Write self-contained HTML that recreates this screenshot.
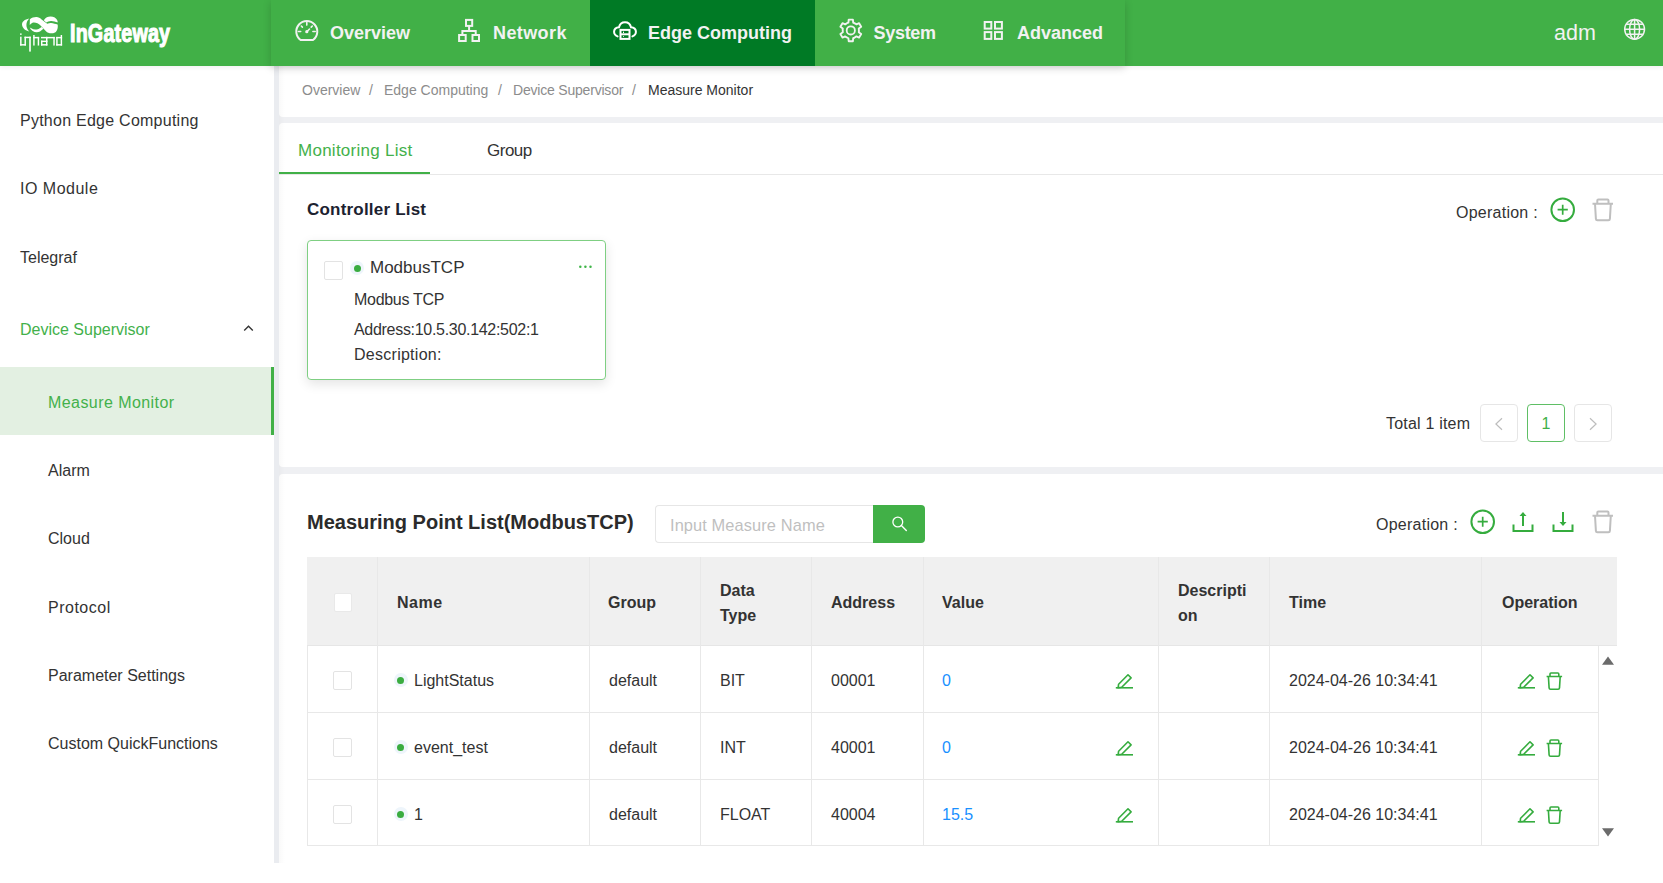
<!DOCTYPE html>
<html><head><meta charset="utf-8">
<style>
*{box-sizing:border-box;margin:0;padding:0}
html,body{width:1663px;height:883px;overflow:hidden;background:#fff;font-family:"Liberation Sans",sans-serif;color:#333}
.a{position:absolute}
.t{position:absolute;white-space:nowrap;line-height:1}
#hdr{left:0;top:0;width:1663px;height:66px;background:#41b047;box-shadow:0 1px 5px rgba(0,0,0,.07);z-index:5}
.nav{color:#f2f2f2;font-size:18px;font-weight:bold}
.side{font-size:16px;color:#333}
.gstrip{background:#eceef2}
svg{position:absolute;overflow:visible}
.th{font-size:16px;font-weight:bold;color:#333}
.td{font-size:16px;color:#333}
</style></head><body>

<!-- HEADER -->
<div id="hdr" class="a">
  <!-- logo -->
  <svg style="left:0;top:0" width="70" height="66" viewBox="0 0 70 66">
    <g fill="#fff">
      <path d="M29.3 18.6C24.6 19.4 21.6 22 22.1 25.2C22.6 28.2 25.4 30.6 29.3 31.4C27.3 29.4 26.4 27.3 26.4 25C26.4 22.6 27.3 20.4 29.3 18.6Z"/>
      <rect x="20.1" y="33.4" width="1.5" height="1.5"/>
      <rect x="20.1" y="36.7" width="1.45" height="8.85"/>
      <rect x="20.1" y="44.1" width="5.85" height="1.45"/>
      <rect x="24.5" y="36.7" width="1.45" height="8.85"/>
      <rect x="24.5" y="36.7" width="6.3" height="1.45"/>
      <rect x="29.2" y="36.7" width="1.6" height="14.9"/>
      <rect x="33.2" y="35.0" width="1.45" height="10.55"/>
      <rect x="33.2" y="36.9" width="5.95" height="1.45"/>
      <rect x="37.7" y="36.9" width="1.45" height="8.65"/>
      <rect x="41" y="36.9" width="6.45" height="1.45"/>
      <rect x="41" y="40.6" width="1.45" height="4.95"/>
      <rect x="41" y="40.6" width="6.45" height="1.45"/>
      <rect x="41" y="44.1" width="6.45" height="1.45"/>
      <rect x="46" y="36.9" width="1.45" height="8.65"/>
      <rect x="46" y="36.9" width="8.75" height="1.45"/>
      <rect x="53.3" y="36.9" width="1.45" height="8.65"/>
      <rect x="56.2" y="36.9" width="1.45" height="8.65"/>
      <rect x="56.2" y="36.9" width="5.9" height="1.45"/>
      <rect x="56.2" y="44.1" width="5.9" height="1.45"/>
      <rect x="60.65" y="35.0" width="1.45" height="10.55"/>
    </g>
    <g fill="#fff">
      <path d="M29.9 19.3C31.5 17.5 34.5 16.8 36.5 16.9C38.5 17 40 17.8 41.3 19.2L47.2 23.8C48.5 23.3 50 22.8 51 22.9C53.5 23 55.5 24 57.6 24.4C58.2 27 57.5 31 55 32.5C52 34 48 33.5 46 31.3L40.5 25.5C38.5 23.5 35 22 32.5 22.8C31.5 23.2 30.5 24 29.7 25Z"/>
      <path d="M29.7 27.5C31.5 31.5 36 33.5 40 31.6L43.4 28.8L41.6 26.9C38.5 29.6 34.5 30.5 31.3 28.3Z"/>
      <path d="M43.8 20.2C45.5 17.5 48 16.6 50.5 16.6C53.5 16.6 56.5 18 57.6 21L57.6 22.6C55.5 21.6 53 20.8 51 20.9C49 21 47.5 21.8 46.2 22.6Z"/>
    </g>
  </svg>
  <div class="t" style="left:70px;top:21px;font-size:25px;font-weight:bold;color:#fff;transform:scaleX(.79);transform-origin:0 0;-webkit-text-stroke:1.1px #fff;letter-spacing:.2px">InGateway</div>

  <div class="a" style="left:271px;top:0;width:854px;height:66px;box-shadow:0 2px 8px rgba(0,0,0,.17)"></div>
  <div class="a" style="left:590px;top:0;width:225px;height:66px;background:#007a25"></div>

  <div class="t nav" style="left:330px;top:24px">Overview</div>
  <div class="t nav" style="left:493px;top:24px;letter-spacing:.4px">Network</div>
  <div class="t nav" style="left:648px;top:24px">Edge Computing</div>
  <div class="t nav" style="left:873.5px;top:24px;letter-spacing:-.3px">System</div>
  <div class="t nav" style="left:1017px;top:24px">Advanced</div>
  <div class="t" style="left:1554px;top:23px;font-size:21.5px;color:#f2f2f2">adm</div>
  <svg style="left:294px;top:18px" width="26" height="26" viewBox="0 0 26 26">
    <path d="M6.6 22A10.5 10.5 0 1 1 19 22Z" fill="none" stroke="#f2f2f2" stroke-width="2" stroke-linejoin="round"/>
    <path d="M12.8 4.6v2.5M4.4 13.5h2.3M18.9 13.5h2.3M7.3 8l1.1 1.1M18.3 8l-1.1 1.1M12.8 13.7l2.7-2.7" stroke="#f2f2f2" stroke-width="1.6" stroke-linecap="round"/>
    <circle cx="12.8" cy="13.7" r="1.6" fill="#f2f2f2"/>
  </svg>
  <svg style="left:456px;top:17px" width="26" height="26" viewBox="0 0 26 26">
    <g fill="none" stroke="#f2f2f2" stroke-width="2">
      <rect x="10" y="2.9" width="6.2" height="6"/>
      <rect x="3.1" y="18" width="6.6" height="6"/>
      <rect x="16.5" y="18" width="6.5" height="6"/>
      <path d="M13.1 8.9V14M6.4 18V14H19.7V18"/>
    </g>
  </svg>
  <svg style="left:611px;top:18px" width="28" height="26" viewBox="0 0 28 26">
    <g fill="none" stroke="#fff" stroke-width="2">
      <path d="M6.6 18.4C1.8 16.5 1.6 10 8 9.3C9.5 2.6 18.5 2.6 20 9.3C26.4 10 26.2 16.5 21.4 18.4" stroke-linecap="round"/>
      <rect x="9.5" y="11.9" width="9" height="9"/>
      <path d="M9.5 16.3h9"/>
    </g>
    <path d="M12.5 13.6v1.4M12.5 18v.8" stroke="#fff" stroke-width="1"/>
  </svg>
  <svg style="left:837px;top:17px" width="28" height="28" viewBox="0 0 28 28">
    <path d="M10.66 5.82 L11.40 5.56 L11.70 2.60 L15.90 2.60 L16.20 5.56 L18.79 6.89 L19.39 7.40 L22.10 6.18 L24.20 9.82 L21.79 11.56 L21.93 14.47 L21.79 15.24 L24.20 16.98 L22.10 20.62 L19.39 19.40 L16.94 20.98 L16.20 21.24 L15.90 24.20 L11.70 24.20 L11.40 21.24 L8.81 19.91 L8.21 19.40 L5.50 20.62 L3.40 16.98 L5.81 15.24 L5.67 12.33 L5.81 11.56 L3.40 9.82 L5.50 6.18 L8.21 7.40Z" fill="none" stroke="#f2f2f2" stroke-width="1.9" stroke-linejoin="round"/>
    <circle cx="13.8" cy="13.4" r="4.1" fill="none" stroke="#f2f2f2" stroke-width="1.8"/>
  </svg>
  <svg style="left:981px;top:19px" width="24" height="24" viewBox="0 0 24 24">
    <g fill="none" stroke="#f2f2f2" stroke-width="2">
      <rect x="3.7" y="3" width="6.6" height="6.6"/>
      <rect x="14" y="3" width="6.9" height="6.6"/>
      <rect x="3.7" y="13.1" width="6.6" height="6.8"/>
      <rect x="14" y="13.1" width="6.9" height="6.8"/>
    </g>
  </svg>
  <svg style="left:1622px;top:17px" width="26" height="26" viewBox="0 0 26 26">
    <g fill="none" stroke="#f2f2f2" stroke-width="1.5">
      <circle cx="12.6" cy="12.3" r="9.9"/>
      <ellipse cx="12.6" cy="12.3" rx="5" ry="9.9"/>
      <path d="M12.6 2.4v19.8M2.7 12.3h19.8M4.3 7.3h16.6M4.3 17.3h16.6"/>
    </g>
  </svg>

</div>

<!-- SIDEBAR -->
<div class="a" style="left:0;top:367px;width:274px;height:68px;background:#e3f0e2"></div>
<div class="a" style="left:271px;top:367px;width:3px;height:68px;background:#41b047"></div>
<div class="t side" style="left:20px;top:113px;letter-spacing:.25px">Python Edge Computing</div>
<div class="t side" style="left:20px;top:181px;letter-spacing:.5px">IO Module</div>
<div class="t side" style="left:20px;top:249.5px">Telegraf</div>
<div class="t side" style="left:20px;top:322px;color:#43b14b">Device Supervisor</div>
<svg style="left:242px;top:322px" width="13" height="11" viewBox="0 0 13 11"><path d="M2.2 8.5l4.3-4.3 4.3 4.3" fill="none" stroke="#333" stroke-width="1.35"/></svg>
<div class="t side" style="left:48px;top:395px;color:#43b14b;letter-spacing:.43px">Measure Monitor</div>
<div class="t side" style="left:48px;top:463px">Alarm</div>
<div class="t side" style="left:48px;top:531px">Cloud</div>
<div class="t side" style="left:48px;top:600px;letter-spacing:.5px">Protocol</div>
<div class="t side" style="left:48px;top:668px">Parameter Settings</div>
<div class="t side" style="left:48px;top:736px">Custom QuickFunctions</div>

<!-- gray strips -->
<div class="a" style="left:274px;top:66px;width:1389px;height:797px;background:#eff0f3"></div>
<div class="a" style="left:274px;top:66px;width:5px;height:797px;background:#eaecf0"></div>
<div class="a" style="left:279px;top:60px;width:1384px;height:57px;background:#fff;border-radius:0 0 0 4px"></div>
<div class="a" style="left:279px;top:123px;width:1384px;height:343.5px;background:#fff;border-radius:4px 0 0 4px"></div>
<div class="a" style="left:279px;top:473.5px;width:1384px;height:389.5px;background:#fff;border-radius:4px 0 0 0"></div>
<div class="a" style="left:279px;top:66px;width:6px;height:797px;background:linear-gradient(90deg,rgba(0,0,0,.025),rgba(0,0,0,0))"></div>

<!-- BREADCRUMB -->
<div class="t" style="left:302px;top:83px;font-size:14px;color:#8c8c8c">Overview</div>
<div class="t" style="left:369px;top:83px;font-size:14px;color:#8c8c8c">/</div>
<div class="t" style="left:384px;top:83px;font-size:14px;color:#8c8c8c">Edge Computing</div>
<div class="t" style="left:498px;top:83px;font-size:14px;color:#8c8c8c">/</div>
<div class="t" style="left:513px;top:83px;font-size:14px;color:#8c8c8c;letter-spacing:-.2px">Device Supervisor</div>
<div class="t" style="left:632px;top:83px;font-size:14px;color:#8c8c8c">/</div>
<div class="t" style="left:648px;top:83px;font-size:14px;color:#333">Measure Monitor</div>

<!-- TABS -->
<div class="a" style="left:279px;top:174px;width:1384px;height:1px;background:#e8e8e8"></div>
<div class="a" style="left:279px;top:172px;width:151px;height:2px;background:#41b047"></div>
<div class="t" style="left:298px;top:142px;font-size:17px;color:#43b14b;letter-spacing:.26px">Monitoring List</div>
<div class="t" style="left:487px;top:142px;font-size:17px;color:#333;letter-spacing:-.5px">Group</div>

<!-- CONTROLLER LIST -->
<div class="t" style="left:307px;top:201px;font-size:17px;font-weight:bold;color:#1c2230;letter-spacing:.2px">Controller List</div>
<div class="t" style="left:1456px;top:204.5px;font-size:16px;color:#333;letter-spacing:.25px">Operation :</div>
<svg style="left:1550px;top:197px" width="26" height="26" viewBox="0 0 26 26">
  <circle cx="12.7" cy="12.7" r="11.3" fill="none" stroke="#35ac3e" stroke-width="2"/>
  <path d="M12.7 7.8v10M7.6 12.7h10.2" stroke="#35ac3e" stroke-width="1.7"/>
</svg>
<svg style="left:1590px;top:197px" width="26" height="26" viewBox="0 0 26 26">
  <path d="M2.5 6.7h20.5M7.3 6.7V3.4a1 1 0 0 1 1-1h9.2a1 1 0 0 1 1 1v3.3M5 6.7l.9 15.2a1.5 1.5 0 0 0 1.5 1.4h11a1.5 1.5 0 0 0 1.5-1.4l.9-15.2" fill="none" stroke="#bfbfbf" stroke-width="2"/>
</svg>

<!-- card -->
<div class="a" style="left:307px;top:240px;width:299px;height:140px;border:1px solid #7fcf83;border-radius:4px;box-shadow:0 4px 12px rgba(0,0,0,.11);background:#fff"></div>
<div class="a" style="left:324px;top:261px;width:19px;height:19px;border:1px solid #e3e3e3;border-radius:2px;background:#fff"></div>
<div class="a" style="left:350px;top:261px;width:14px;height:14px;border-radius:50%;background:#eef5fb"></div>
<div class="a" style="left:353.5px;top:264.5px;width:7px;height:7px;border-radius:50%;background:#3aac40"></div>
<div class="t" style="left:370px;top:259px;font-size:17px;color:#333">ModbusTCP</div>
<svg style="left:577px;top:263px" width="18" height="8" viewBox="0 0 18 8">
  <circle cx="3.3" cy="3.8" r="1.25" fill="#3fb548"/><circle cx="8.4" cy="3.8" r="1.25" fill="#3fb548"/><circle cx="13.5" cy="3.8" r="1.25" fill="#3fb548"/>
</svg>
<div class="t" style="left:354px;top:292px;font-size:16px;color:#333;letter-spacing:-.3px">Modbus TCP</div>
<div class="t" style="left:354px;top:322px;font-size:16px;color:#333;letter-spacing:-.3px">Address:10.5.30.142:502:1</div>
<div class="t" style="left:354px;top:347px;font-size:16px;color:#333;letter-spacing:.27px">Description:</div>

<!-- pagination -->
<div class="t" style="left:1386px;top:416px;font-size:16px;color:#333;letter-spacing:.2px">Total 1 item</div>
<div class="a" style="left:1480px;top:404px;width:38px;height:38px;border:1px solid #e6e6e6;border-radius:4px"></div>
<svg style="left:1480px;top:404px" width="38" height="38" viewBox="0 0 38 38"><path d="M22 14.2L15.9 20 22 25.8" fill="none" stroke="#bdbdbd" stroke-width="1.2"/></svg>
<div class="a" style="left:1527px;top:404px;width:38px;height:38px;border:1px solid #5fbf65;border-radius:4px"></div>
<div class="t" style="left:1527px;top:416px;width:38px;text-align:center;font-size:16px;color:#41b047">1</div>
<div class="a" style="left:1574px;top:404px;width:38px;height:38px;border:1px solid #e6e6e6;border-radius:4px"></div>
<svg style="left:1574px;top:404px" width="38" height="38" viewBox="0 0 38 38"><path d="M16 14.2L22.1 20 16 25.8" fill="none" stroke="#bdbdbd" stroke-width="1.2"/></svg>

<!-- MEASURING POINT LIST -->
<div class="t" style="left:307px;top:512px;font-size:20px;font-weight:bold;color:#2b2b2b">Measuring Point List(ModbusTCP)</div>
<div class="a" style="left:655px;top:505px;width:220px;height:37.5px;border:1px solid #e6e6e6;border-right:none;border-radius:4px 0 0 4px"></div>
<div class="t" style="left:670px;top:517px;font-size:16.4px;color:#bfbfbf;letter-spacing:.1px">Input Measure Name</div>
<div class="a" style="left:873px;top:505px;width:52px;height:37.5px;background:#41b047;border-radius:0 4px 4px 0"></div>
<svg style="left:873px;top:505px" width="52" height="37" viewBox="0 0 52 37">
  <circle cx="24.8" cy="17" r="4.9" fill="none" stroke="#fff" stroke-width="1.3"/>
  <path d="M28.4 20.6l4.9 4.9" stroke="#fff" stroke-width="1.4" stroke-linecap="round"/>
</svg>
<div class="t" style="left:1376px;top:516.5px;font-size:16px;color:#333;letter-spacing:.25px">Operation :</div>
<svg style="left:1470px;top:509px" width="26" height="26" viewBox="0 0 26 26">
  <circle cx="12.7" cy="12.7" r="11.3" fill="none" stroke="#35ac3e" stroke-width="2"/>
  <path d="M12.7 7.8v10M7.6 12.7h10.2" stroke="#35ac3e" stroke-width="1.7"/>
</svg>
<svg style="left:1510px;top:509px" width="26" height="26" viewBox="0 0 26 26">
  <path d="M3.5 15.5v6.5h19v-6.5" fill="none" stroke="#35ac3e" stroke-width="2"/>
  <path d="M13 17V5" stroke="#35ac3e" stroke-width="2"/>
  <path d="M9.5 7l3.5-4 3.5 4z" fill="#35ac3e"/>
</svg>
<svg style="left:1550px;top:509px" width="26" height="26" viewBox="0 0 26 26">
  <path d="M3.5 15.5v6.5h19v-6.5" fill="none" stroke="#35ac3e" stroke-width="2"/>
  <path d="M13 3v11" stroke="#35ac3e" stroke-width="2"/>
  <path d="M9.5 13l3.5 4 3.5-4z" fill="#35ac3e"/>
</svg>
<svg style="left:1590px;top:509px" width="26" height="26" viewBox="0 0 26 26">
  <path d="M2.5 6.7h20.5M7.3 6.7V3.4a1 1 0 0 1 1-1h9.2a1 1 0 0 1 1 1v3.3M5 6.7l.9 15.2a1.5 1.5 0 0 0 1.5 1.4h11a1.5 1.5 0 0 0 1.5-1.4l.9-15.2" fill="none" stroke="#bfbfbf" stroke-width="2"/>
</svg>

<!-- TABLE -->
<div class="a" style="left:307px;top:557px;width:1310px;height:89px;background:#f0f0f0"></div>
<div class="a" style="left:307px;top:645px;width:1310px;height:1px;background:#e6e6e6"></div>
<div class="a" style="left:377px;top:557px;width:1px;height:289px;background:#e8e8e8"></div>
<div class="a" style="left:589px;top:557px;width:1px;height:289px;background:#e8e8e8"></div>
<div class="a" style="left:700px;top:557px;width:1px;height:289px;background:#e8e8e8"></div>
<div class="a" style="left:811px;top:557px;width:1px;height:289px;background:#e8e8e8"></div>
<div class="a" style="left:923px;top:557px;width:1px;height:289px;background:#e8e8e8"></div>
<div class="a" style="left:1158px;top:557px;width:1px;height:289px;background:#e8e8e8"></div>
<div class="a" style="left:1269px;top:557px;width:1px;height:289px;background:#e8e8e8"></div>
<div class="a" style="left:1481px;top:557px;width:1px;height:289px;background:#e8e8e8"></div>
<div class="a" style="left:307px;top:646px;width:1px;height:200px;background:#e8e8e8"></div>
<div class="a" style="left:1598px;top:646px;width:1px;height:200px;background:#e8e8e8"></div>
<div class="a" style="left:307px;top:712px;width:1292px;height:1px;background:#e8e8e8"></div>
<div class="a" style="left:307px;top:779px;width:1292px;height:1px;background:#e8e8e8"></div>
<div class="a" style="left:307px;top:845px;width:1292px;height:1px;background:#e8e8e8"></div>
<div class="a" style="left:333.5px;top:593px;width:18.5px;height:18.5px;background:#fff;border-radius:2px;border:1px solid #e9e9e9"></div>
<div class="t th" style="left:397px;top:595px;letter-spacing:.5px">Name</div>
<div class="t th" style="left:608px;top:595px">Group</div>
<div class="t th" style="left:720px;top:583px">Data</div>
<div class="t th" style="left:720px;top:608px">Type</div>
<div class="t th" style="left:831px;top:595px">Address</div>
<div class="t th" style="left:942px;top:595px">Value</div>
<div class="t th" style="left:1178px;top:583px">Descripti</div>
<div class="t th" style="left:1178px;top:608px">on</div>
<div class="t th" style="left:1289px;top:595px">Time</div>
<div class="t th" style="left:1502px;top:595px">Operation</div>
<div class="a" style="left:333px;top:671px;width:19px;height:19px;background:#fff;border-radius:2px;border:1px solid #e3e3e3"></div>
<div class="a" style="left:393.5px;top:673px;width:14px;height:14px;border-radius:50%;background:#eef5fb"></div>
<div class="a" style="left:397px;top:676.5px;width:7px;height:7px;border-radius:50%;background:#3aac40"></div>
<div class="t td" style="left:414px;top:673px">LightStatus</div>
<div class="t td" style="left:609px;top:673px">default</div>
<div class="t td" style="left:720px;top:673px">BIT</div>
<div class="t td" style="left:831px;top:673px">00001</div>
<div class="t td" style="left:942px;top:673px;color:#1890ff">0</div>
<svg style="left:1115px;top:671px" width="20" height="20" viewBox="0 0 20 20"><path d="M3.6 13.2l9.4-9.4 3.1 3.1-9.4 9.4-3.6.5z" fill="none" stroke="#35ac3e" stroke-width="1.6" stroke-linejoin="round"/><path d="M.8 16.8h17.2" stroke="#35ac3e" stroke-width="1.6"/></svg>
<div class="t td" style="left:1289px;top:673px">2024-04-26 10:34:41</div>
<svg style="left:1517px;top:671px" width="20" height="20" viewBox="0 0 20 20"><path d="M3.6 13.2l9.4-9.4 3.1 3.1-9.4 9.4-3.6.5z" fill="none" stroke="#35ac3e" stroke-width="1.6" stroke-linejoin="round"/><path d="M.8 16.8h17.2" stroke="#35ac3e" stroke-width="1.6"/></svg>
<svg style="left:1546px;top:672px" width="20" height="20" viewBox="0 0 20 20"><path d="M.6 4.5h15.5M4 4.5V2a1 1 0 0 1 1-1h6.8a1 1 0 0 1 1 1v2.5M2.4 4.5l.7 11.4a1.4 1.4 0 0 0 1.4 1.3h7.6a1.4 1.4 0 0 0 1.4-1.3l.7-11.4" fill="none" stroke="#35ac3e" stroke-width="1.6"/></svg>
<div class="a" style="left:333px;top:738px;width:19px;height:19px;background:#fff;border-radius:2px;border:1px solid #e3e3e3"></div>
<div class="a" style="left:393.5px;top:740px;width:14px;height:14px;border-radius:50%;background:#eef5fb"></div>
<div class="a" style="left:397px;top:743.5px;width:7px;height:7px;border-radius:50%;background:#3aac40"></div>
<div class="t td" style="left:414px;top:740px">event_test</div>
<div class="t td" style="left:609px;top:740px">default</div>
<div class="t td" style="left:720px;top:740px">INT</div>
<div class="t td" style="left:831px;top:740px">40001</div>
<div class="t td" style="left:942px;top:740px;color:#1890ff">0</div>
<svg style="left:1115px;top:738px" width="20" height="20" viewBox="0 0 20 20"><path d="M3.6 13.2l9.4-9.4 3.1 3.1-9.4 9.4-3.6.5z" fill="none" stroke="#35ac3e" stroke-width="1.6" stroke-linejoin="round"/><path d="M.8 16.8h17.2" stroke="#35ac3e" stroke-width="1.6"/></svg>
<div class="t td" style="left:1289px;top:740px">2024-04-26 10:34:41</div>
<svg style="left:1517px;top:738px" width="20" height="20" viewBox="0 0 20 20"><path d="M3.6 13.2l9.4-9.4 3.1 3.1-9.4 9.4-3.6.5z" fill="none" stroke="#35ac3e" stroke-width="1.6" stroke-linejoin="round"/><path d="M.8 16.8h17.2" stroke="#35ac3e" stroke-width="1.6"/></svg>
<svg style="left:1546px;top:739px" width="20" height="20" viewBox="0 0 20 20"><path d="M.6 4.5h15.5M4 4.5V2a1 1 0 0 1 1-1h6.8a1 1 0 0 1 1 1v2.5M2.4 4.5l.7 11.4a1.4 1.4 0 0 0 1.4 1.3h7.6a1.4 1.4 0 0 0 1.4-1.3l.7-11.4" fill="none" stroke="#35ac3e" stroke-width="1.6"/></svg>
<div class="a" style="left:333px;top:805px;width:19px;height:19px;background:#fff;border-radius:2px;border:1px solid #e3e3e3"></div>
<div class="a" style="left:393.5px;top:807px;width:14px;height:14px;border-radius:50%;background:#eef5fb"></div>
<div class="a" style="left:397px;top:810.5px;width:7px;height:7px;border-radius:50%;background:#3aac40"></div>
<div class="t td" style="left:414px;top:807px">1</div>
<div class="t td" style="left:609px;top:807px">default</div>
<div class="t td" style="left:720px;top:807px">FLOAT</div>
<div class="t td" style="left:831px;top:807px">40004</div>
<div class="t td" style="left:942px;top:807px;color:#1890ff">15.5</div>
<svg style="left:1115px;top:805px" width="20" height="20" viewBox="0 0 20 20"><path d="M3.6 13.2l9.4-9.4 3.1 3.1-9.4 9.4-3.6.5z" fill="none" stroke="#35ac3e" stroke-width="1.6" stroke-linejoin="round"/><path d="M.8 16.8h17.2" stroke="#35ac3e" stroke-width="1.6"/></svg>
<div class="t td" style="left:1289px;top:807px">2024-04-26 10:34:41</div>
<svg style="left:1517px;top:805px" width="20" height="20" viewBox="0 0 20 20"><path d="M3.6 13.2l9.4-9.4 3.1 3.1-9.4 9.4-3.6.5z" fill="none" stroke="#35ac3e" stroke-width="1.6" stroke-linejoin="round"/><path d="M.8 16.8h17.2" stroke="#35ac3e" stroke-width="1.6"/></svg>
<svg style="left:1546px;top:806px" width="20" height="20" viewBox="0 0 20 20"><path d="M.6 4.5h15.5M4 4.5V2a1 1 0 0 1 1-1h6.8a1 1 0 0 1 1 1v2.5M2.4 4.5l.7 11.4a1.4 1.4 0 0 0 1.4 1.3h7.6a1.4 1.4 0 0 0 1.4-1.3l.7-11.4" fill="none" stroke="#35ac3e" stroke-width="1.6"/></svg>
<svg style="left:1599px;top:646px" width="18" height="200" viewBox="0 0 18 200"><path d="M3 18.8h12L9 10.5z" fill="#6b6b6b"/><path d="M3 182.3h12L9 190.5z" fill="#6b6b6b"/></svg>

</body></html>
